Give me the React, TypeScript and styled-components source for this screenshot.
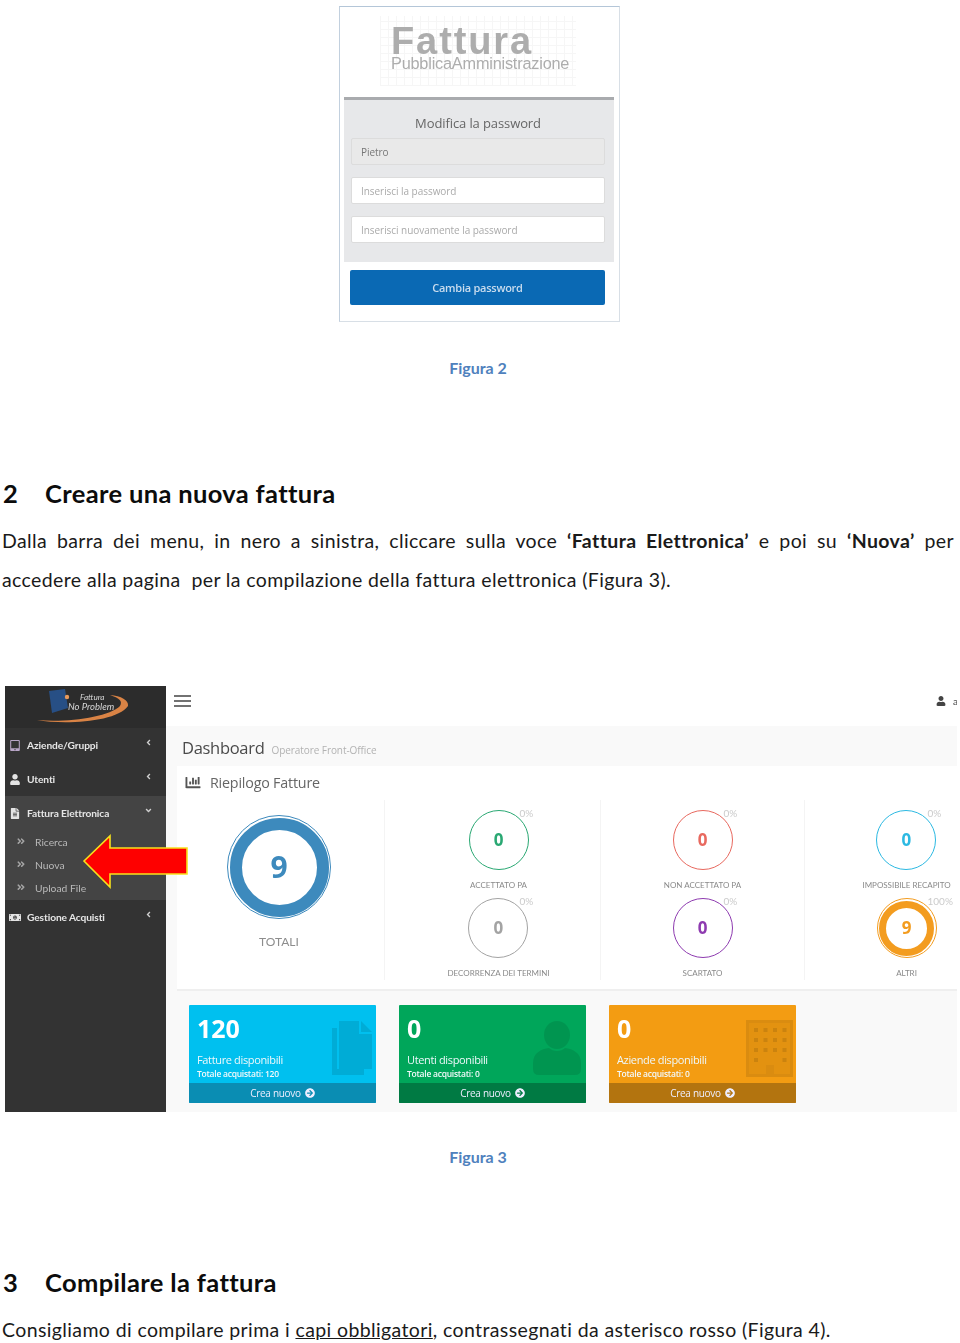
import React from "react";
import styled, { createGlobalStyle } from "styled-components";
import {
  FaAngleDoubleRight,
  FaAngleDown,
  FaAngleLeft,
  FaArrowCircleRight,
  FaChartBar,
  FaFileAlt,
  FaMoneyBillAlt,
  FaTabletAlt,
  FaUser,
} from "react-icons/fa";

const GlobalStyle = createGlobalStyle`
  html, body {
    margin: 0;
    padding: 0;
    background: #fff;
  }
  * {
    box-sizing: border-box;
  }
`;

const Page = styled.div`
  width: 960px;
  height: 1343px;
  overflow: hidden;
  padding: 6px 3px 0 2px;
  font-family: Lato, "Open Sans", sans-serif;
  color: #111;
`;

const Caption = styled.div<{ $top: number }>`
  margin-top: ${(p) => p.$top}px;
  height: 20px;
  line-height: 20px;
  text-align: center;
  font-size: 16px;
  font-weight: 700;
  color: #4f81bd;
  padding-right: 3px;
`;

const Heading = styled.h2<{ $top: number }>`
  margin: ${(p) => p.$top}px 0 0;
  display: flex;
  height: 30px;
  line-height: 30px;
  font-size: 25.5px;
  letter-spacing: 0.35px;
  font-weight: 700;
  color: #0c0c0c;

  span {
    width: 43px;
    padding-left: 1px;
  }
`;

const Paragraph = styled.p<{ $top: number }>`
  margin: ${(p) => p.$top}px 3px 0 0;
  font-size: 19.5px;
  letter-spacing: 0.38px;
  line-height: 39.5px;
  color: #1a1a1a;
`;

const JustifiedLine = styled.span`
  display: block;
  text-align: justify;
  text-align-last: justify;
`;

/* ---- Figura 2 ---- */

const LoginCard = styled.div`
  width: 281px;
  height: 316px;
  margin: 0 auto;
  padding: 0 5px 0 4px;
  border: 1px solid #d8dfe6;
  border-top-color: #b4c6d8;
  border-left-color: #c2d0de;
  background: #fff;
  filter: blur(0.35px);
  font-family: "Open Sans", sans-serif;
`;

const LoginLogo = styled.div`
  height: 90px;
  padding: 17px 0 0 47px;
  background-image:
    repeating-linear-gradient(0deg, #f6f6f6 0 1px, transparent 1px 8px),
    repeating-linear-gradient(90deg, #f6f6f6 0 1px, transparent 1px 8px);
  background-size: 196px 70px;
  background-position: 36px 9px;
  background-repeat: no-repeat;
  font-family: "Liberation Sans", Arial, sans-serif;
  color: #adadad;
`;

const LogoTitle = styled.div`
  font-size: 38px;
  line-height: 34px;
  font-weight: 700;
  letter-spacing: 1.9px;
`;

const LogoSubtitle = styled.div`
  font-size: 16.3px;
  line-height: 11px;
  letter-spacing: -0.2px;
  white-space: nowrap;
`;

const LoginForm = styled.div`
  height: 165px;
  padding: 13px 9px 0 7px;
  background: #e7e8ea;
  border-top: 3px solid #a9abae;
`;

const LoginTitle = styled.div`
  height: 20px;
  line-height: 20px;
  text-align: center;
  font-size: 13px;
  color: #666;
  letter-spacing: -0.1px;
  margin-bottom: 5px;
`;

const LoginInput = styled.div<{ $disabled?: boolean }>`
  height: 27px;
  line-height: 26px;
  padding-left: 9px;
  margin-bottom: 12px;
  font-size: 10px;
  letter-spacing: -0.05px;
  color: ${(p) => (p.$disabled ? "#777" : "#aaa")};
  background: ${(p) => (p.$disabled ? "#e9e9e9" : "#fff")};
  border: 1px solid #dcdcdc;
  border-radius: 2px;
`;

const LoginButton = styled.div`
  height: 35px;
  margin: 8px 9px 0 6px;
  line-height: 35px;
  text-align: center;
  font-size: 11px;
  font-weight: 600;
  letter-spacing: -0.25px;
  color: #c9dcee;
  background: #0a69b4;
  border-radius: 2px;
`;

/* ---- Figura 3 ---- */

const Dashboard = styled.div`
  position: relative;
  display: flex;
  width: 952px;
  height: 426px;
  margin: 86.5px 0 0 3px;
  overflow: hidden;
  filter: blur(0.3px);
`;

const Sidebar = styled.aside`
  flex: 0 0 161px;
  background: #333;
  color: #e6e6e6;
`;

const SidebarLogo = styled.div`
  position: relative;
  height: 42px;
  background: #2c2c2c;
`;

const LogoLine = styled.span<{ $left: number; $top: number; $size: number }>`
  position: absolute;
  left: ${(p) => p.$left}px;
  top: ${(p) => p.$top}px;
  font-size: ${(p) => p.$size}px;
  line-height: 10px;
  font-style: italic;
  color: #d8d8d8;
  white-space: nowrap;
`;

const MenuItem = styled.div<{ $open?: boolean }>`
  display: flex;
  align-items: center;
  height: 34px;
  padding: 0 13px 0 4px;
  font-size: 10.2px;
  letter-spacing: -0.1px;
  font-weight: 700;
  background: ${(p) => (p.$open ? "#444" : "transparent")};

  & > svg:first-child {
    flex: 0 0 12px;
    margin-right: 6px;
    width: 12px;
    height: 11px;
    color: #e4e4e4;
  }

  span {
    flex: 1;
    white-space: nowrap;
  }
`;

const Chevron = styled.div`
  display: flex;
  margin-top: -5px;
  color: #cfcfcf;
  font-size: 9px;
`;

const SubMenu = styled.div`
  height: 70px;
  background: #444;
`;

const SubItem = styled.div`
  display: flex;
  align-items: center;
  height: 23px;
  padding-left: 12px;
  font-size: 10.3px;
  color: #b9b9b9;

  svg {
    width: 8px;
    margin-right: 10px;
    color: #a5a5a5;
  }
`;

const Main = styled.main`
  flex: 0 0 900px;
  background: #f9f9f9;
`;

const TopBar = styled.div`
  display: flex;
  align-items: center;
  height: 40px;
  padding: 0 0 10px 8px;
  background: #fff;
`;

const UserMenu = styled.div`
  display: flex;
  align-items: center;
  margin-left: 744px;
  font-size: 10px;
  color: #444;

  svg {
    margin-right: 7px;
  }
`;

const PageHeader = styled.div`
  display: flex;
  align-items: baseline;
  height: 40px;
  padding: 10px 0 0 16px;
  font-family: "Open Sans", sans-serif;
`;

const PageTitle = styled.span`
  font-size: 16.5px;
  letter-spacing: -0.3px;
  color: #4a4a4a;
`;

const PageSubtitle = styled.span`
  margin-left: 7px;
  font-size: 10px;
  letter-spacing: -0.07px;
  color: #b2b2b2;
`;

const Panel = styled.section`
  width: 860px;
  height: 225px;
  margin-left: 11px;
  background: #fff;
  border-bottom: 2px solid #efefef;
`;

const PanelTitle = styled.div`
  display: flex;
  align-items: center;
  height: 34px;
  padding: 0 0 2px 7px;
  font-family: "Open Sans", sans-serif;
  font-size: 14.3px;
  letter-spacing: -0.2px;
  color: #666;

  svg {
    width: 18px;
    height: 15px;
    margin-right: 8px;
    color: #555;
  }
`;

const Charts = styled.div`
  display: flex;
`;

const TotalColumn = styled.div`
  display: flex;
  flex-direction: column;
  align-items: center;
  width: 208px;
  height: 180px;
  margin-right: 12px;
  padding: 15px 3px 0 0;
  border-right: 1px solid #f4f4f4;
`;

const TotalLabel = styled.div`
  margin-top: 16px;
  font-size: 12px;
  line-height: 14px;
  color: #8d8d8d;
`;

const ChartColumn = styled.div`
  display: grid;
  grid-template-rows: 88px 88px;
  justify-items: center;
  width: 204px;
  height: 180px;
  padding-top: 10px;
  border-right: 1px solid #f4f4f4;
`;

const ChartCell = styled.div`
  display: flex;
  flex-direction: column;
  align-items: center;
`;

const Gauge = styled.div<{ $size: number; $band: number; $ring: number; $color: string }>`
  position: relative;
  display: flex;
  align-items: center;
  justify-content: center;
  flex: 0 0 ${(p) => p.$size}px;
  width: ${(p) => p.$size}px;
  height: ${(p) => p.$size}px;
  padding-bottom: 2px;
  border: ${(p) => p.$ring}px solid ${(p) => p.$color};
  border-radius: 50%;
  font-family: "Open Sans", sans-serif;
  font-size: ${(p) => (p.$size > 80 ? 30 : 17)}px;
  font-weight: 700;
  color: ${(p) => p.$color};

  &::before {
    content: "";
    display: ${(p) => (p.$band ? "block" : "none")};
    position: absolute;
    inset: 1.5px;
    border: ${(p) => p.$band}px solid ${(p) => p.$color};
    border-radius: 50%;
  }
`;

const Percent = styled.span`
  position: absolute;
  left: 50px;
  top: -3px;
  font-family: Lato, sans-serif;
  font-size: 10px;
  line-height: 10px;
  font-weight: 400;
  color: #cbcbcb;
`;

const ChartLabel = styled.div`
  margin-top: 10px;
  font-size: 8px;
  line-height: 10px;
  color: #8a8a8a;
  white-space: nowrap;
`;

const Tiles = styled.div`
  display: flex;
  gap: 23px;
  padding: 14px 0 0 23px;
`;

const Tile = styled.div<{ $color: string; $footer: string }>`
  position: relative;
  width: 187px;
  height: 98px;
  padding: 9px 0 0 8px;
  border-radius: 1px;
  background: ${(p) => p.$color};
  color: #fff;
  overflow: hidden;
  font-family: "Open Sans", sans-serif;

  footer {
    position: absolute;
    left: 0;
    right: 0;
    bottom: 0;
    display: flex;
    align-items: center;
    justify-content: center;
    gap: 4px;
    height: 20px;
    font-size: 10px;
    letter-spacing: -0.3px;
    color: #eef;
    background: ${(p) => p.$footer};
  }
`;

const TileNumber = styled.div`
  font-size: 25px;
  line-height: 28px;
  font-weight: 700;
`;

const TileTitle = styled.div`
  margin-top: 11px;
  font-size: 11px;
  line-height: 14px;
  letter-spacing: -0.35px;
  color: #eef8fb;
`;

const TileNote = styled.div`
  font-size: 8.5px;
  line-height: 14px;
  font-weight: 600;
  letter-spacing: -0.25px;
  color: #f2f9fb;
`;

const TileIcon = styled.svg<{ $right: number; $top: number }>`
  position: absolute;
  top: ${(p) => p.$top}px;
  right: ${(p) => p.$right}px;
  fill: rgba(0, 0, 0, 0.1);
`;

const RedArrow = styled.svg`
  position: absolute;
  left: 77px;
  top: 148px;
`;

const Underlined = styled.span`
  text-decoration: underline;
`;

type Chart = { label: string; value: number; percent: string; color: string; band?: number };

const chartColumns: Chart[][] = [
  [
    { label: "ACCETTATO PA", value: 0, percent: "0%", color: "#2aa873" },
    { label: "DECORRENZA DEI TERMINI", value: 0, percent: "0%", color: "#a3a3a3" },
  ],
  [
    { label: "NON ACCETTATO PA", value: 0, percent: "0%", color: "#e8695f" },
    { label: "SCARTATO", value: 0, percent: "0%", color: "#8e3bb0" },
  ],
  [
    { label: "IMPOSSIBILE RECAPITO", value: 0, percent: "0%", color: "#2cb9e2" },
    { label: "ALTRI", value: 9, percent: "100%", color: "#f39c1f", band: 7 },
  ],
];

const menuIcons = { width: 11, height: 11 };

const windows: number[][] = [];
for (let row = 0; row < 4; row++) {
  for (let col = 0; col < 4; col++) {
    if (row < 3 || col === 0 || col === 3) windows.push([col, row]);
  }
}

const App = () => {
  return (
    <Page>
      <GlobalStyle />

      <LoginCard>
        <LoginLogo>
          <LogoTitle>Fattura</LogoTitle>
          <LogoSubtitle>PubblicaAmministrazione</LogoSubtitle>
        </LoginLogo>
        <LoginForm>
          <LoginTitle>Modifica la password</LoginTitle>
          <LoginInput $disabled>Pietro</LoginInput>
          <LoginInput>Inserisci la password</LoginInput>
          <LoginInput>Inserisci nuovamente la password</LoginInput>
        </LoginForm>
        <LoginButton>Cambia password</LoginButton>
      </LoginCard>

      <Caption $top={36}>Figura 2</Caption>

      <Heading $top={100}>
        <span>2</span>Creare una nuova fattura
      </Heading>
      <Paragraph $top={12.5}>
        <JustifiedLine>
          Dalla barra dei menu, in nero a sinistra, cliccare sulla voce{" "}
          <b>‘Fattura Elettronica’</b> e poi su <b>‘Nuova’</b> per
        </JustifiedLine>
        accedere alla pagina&nbsp; per la compilazione della fattura elettronica (Figura 3).
      </Paragraph>

      <Dashboard>
        <Sidebar>
          <SidebarLogo>
            <svg width="161" height="42" viewBox="0 0 161 42">
              <path d="M44 5 L60 3 L63 22 L47 27 Z" fill="#274f85" />
              <circle cx="62" cy="11" r="2.2" fill="#e89a5c" />
              <path
                d="M32 34 C60 39 112 36 123 20 C124 14 116 10 105 9 C114 12 118 15 115 20 C104 31 62 37 32 34 Z"
                fill="#d98345"
              />
            </svg>
            <LogoLine $left={75} $top={6} $size={8.2}>
              Fattura
            </LogoLine>
            <LogoLine $left={63} $top={16} $size={9.5}>
              No Problem
            </LogoLine>
          </SidebarLogo>
          <MenuItem>
            <FaTabletAlt color="#b9a6c8" />
            <span>Aziende/Gruppi</span>
            <Chevron>
              <FaAngleLeft />
            </Chevron>
          </MenuItem>
          <MenuItem>
            <FaUser {...menuIcons} />
            <span>Utenti</span>
            <Chevron>
              <FaAngleLeft />
            </Chevron>
          </MenuItem>
          <MenuItem $open>
            <FaFileAlt {...menuIcons} />
            <span>Fattura Elettronica</span>
            <Chevron>
              <FaAngleDown />
            </Chevron>
          </MenuItem>
          <SubMenu>
            <SubItem>
              <FaAngleDoubleRight />
              Ricerca
            </SubItem>
            <SubItem>
              <FaAngleDoubleRight />
              Nuova
            </SubItem>
            <SubItem>
              <FaAngleDoubleRight />
              Upload File
            </SubItem>
          </SubMenu>
          <MenuItem>
            <FaMoneyBillAlt {...menuIcons} />
            <span>Gestione Acquisti</span>
            <Chevron>
              <FaAngleLeft />
            </Chevron>
          </MenuItem>
        </Sidebar>

        <Main>
          <TopBar>
            <svg width="18" height="12" viewBox="0 0 18 12">
              <path d="M0 1h17M0 6h17M0 11h17" stroke="#444" strokeWidth="1.3" />
            </svg>
            <UserMenu>
              <FaUser size={10} />a
            </UserMenu>
          </TopBar>
          <PageHeader>
            <PageTitle>Dashboard</PageTitle>
            <PageSubtitle>Operatore Front-Office</PageSubtitle>
          </PageHeader>
          <Panel>
            <PanelTitle>
              <FaChartBar />
              Riepilogo Fatture
            </PanelTitle>
            <Charts>
              <TotalColumn>
                <Gauge $size={104} $band={12} $ring={1.5} $color="#3d8abd">
                  9
                </Gauge>
                <TotalLabel>TOTALI</TotalLabel>
              </TotalColumn>
              {chartColumns.map((column, i) => (
                <ChartColumn key={i}>
                  {column.map((chart) => (
                    <ChartCell key={chart.label}>
                      <Gauge $size={60} $band={chart.band ?? 0} $ring={1.5} $color={chart.color}>
                        {chart.value}
                        <Percent>{chart.percent}</Percent>
                      </Gauge>
                      <ChartLabel>{chart.label}</ChartLabel>
                    </ChartCell>
                  ))}
                </ChartColumn>
              ))}
            </Charts>
          </Panel>
          <Tiles>
            <Tile $color="#00c0ef" $footer="#0a8db3">
              <TileNumber>120</TileNumber>
              <TileTitle>Fatture disponibili</TileTitle>
              <TileNote>Totale acquistati: 120</TileNote>
              <TileIcon $right={4} $top={16} width="40" height="54" viewBox="0 0 40 54">
                <path d="M0 7h5v41h27v6H0z" />
                <path d="M7 0h20v13h13v35H7z" />
                <path d="M29 0l11 11H29z" />
              </TileIcon>
              <footer>
                Crea nuovo <FaArrowCircleRight size={10} />
              </footer>
            </Tile>
            <Tile $color="#00a65a" $footer="#007a43">
              <TileNumber>0</TileNumber>
              <TileTitle>Utenti disponibili</TileTitle>
              <TileNote>Totale acquistati: 0</TileNote>
              <TileIcon $right={5} $top={16} width="48" height="54" viewBox="0 0 48 54">
                <ellipse cx="24" cy="14" rx="13" ry="14" />
                <path d="M0 42C0 32 8 28 16 27C20 31 28 31 32 27C40 28 48 32 48 42V48Q48 54 42 54H6Q0 54 0 48Z" />
              </TileIcon>
              <footer>
                Crea nuovo <FaArrowCircleRight size={10} />
              </footer>
            </Tile>
            <Tile $color="#f39c12" $footer="#b3740f">
              <TileNumber>0</TileNumber>
              <TileTitle>Aziende disponibili</TileTitle>
              <TileNote>Totale acquistati: 0</TileNote>
              <TileIcon $right={3} $top={15} width="47" height="57" viewBox="0 0 47 57">
                <path fillRule="evenodd" d="M0 0h47v57H0zM3 3v51h17v-9h8v9h16V3z" />
                <path d="M3 3h41v51H28v-9h-8v9H3z" opacity="0.6" />
                {windows.map(([col, row]) => (
                  <rect key={`${col}-${row}`} x={8 + col * 9.5} y={8 + row * 10} width="4" height="4" />
                ))}
              </TileIcon>
              <footer>
                Crea nuovo <FaArrowCircleRight size={10} />
              </footer>
            </Tile>
          </Tiles>
        </Main>

        <RedArrow width="108" height="56" viewBox="0 0 108 56">
          <path
            d="M2 27 L28 2 L28 14 L105 14 L105 40 L28 40 L28 53 Z"
            fill="#fe0000"
            stroke="#f6e11c"
            strokeWidth="1.6"
          />
        </RedArrow>
      </Dashboard>

      <Caption $top={34.5}>Figura 3</Caption>

      <Heading $top={100.5}>
        <span>3</span>Compilare la fattura
      </Heading>
      <Paragraph $top={13}>
        Consigliamo di compilare prima i <Underlined>capi obbligatori</Underlined>, contrassegnati
        da asterisco rosso (Figura 4).
      </Paragraph>
    </Page>
  );
};

export default App;
